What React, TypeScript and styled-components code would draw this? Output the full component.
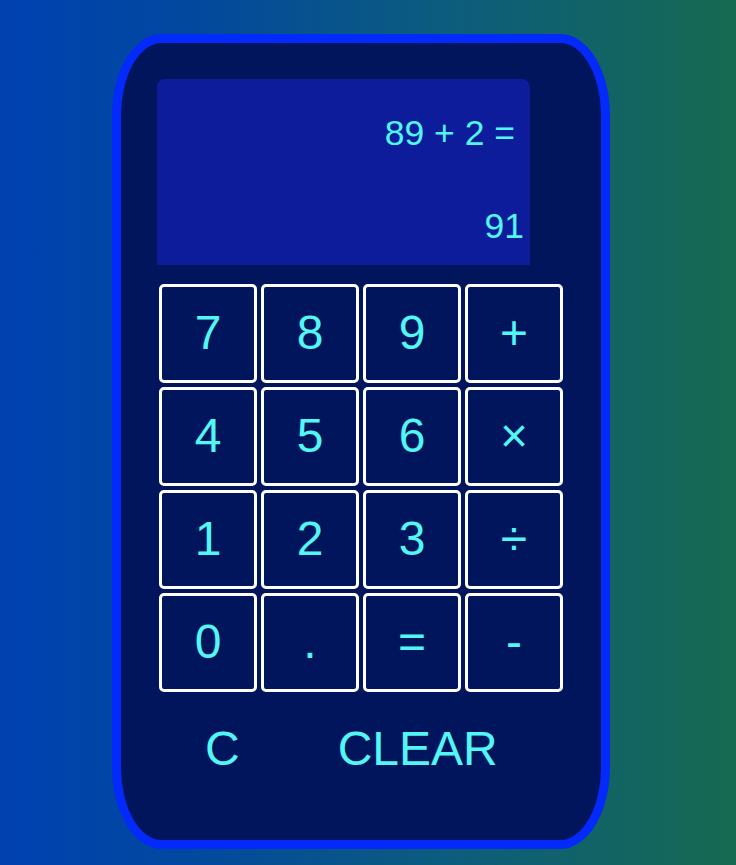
import React from "react";
import styled, { createGlobalStyle } from "styled-components";

const Global = createGlobalStyle`
  html, body { margin: 0; padding: 0; height: 100%; }
  body {
    background: linear-gradient(to right, #0041b1 0%, #02489f 25%, #0c5c7e 60%, #166a50 100%);
    font-family: "Liberation Sans", Arial, sans-serif;
  }
  #root { height: 100%; }
`;

const Page = styled.div`
  height: 865px;
  padding: 34px 0 0 112px;
  box-sizing: border-box;
`;

const Calculator = styled.div`
  width: 480px;
  height: 797px;
  border: 9px solid #0429fb;
  border-radius: 10%;
  background: #01155c;
  display: flex;
  flex-direction: column;
`;

const Display = styled.div`
  margin: 36px 0 0 36px;
  width: 373px;
  height: 186px;
  box-sizing: border-box;
  background: #0c1c9a;
  border-radius: 8px 8px 0 0;
  padding: 34px 6px 18px 0;
  display: flex;
  flex-direction: column;
  justify-content: space-between;
  align-items: flex-end;
  color: #52f6f4;
  font-size: 35.5px;
`;

const Line = styled.div<{ $shift?: number }>`
  margin-right: ${(p) => p.$shift ?? 0}px;
`;

const Keypad = styled.div`
  margin: 19px 0 0 38px;
  display: grid;
  grid-template-columns: repeat(4, 98px);
  grid-auto-rows: 99px;
  gap: 4px;
`;

const Key = styled.button`
  box-sizing: border-box;
  border: 3px solid #ffffff;
  border-radius: 5px;
  background: #01155c;
  color: #52f6f4;
  font-family: "Liberation Sans", Arial, sans-serif;
  font-size: 48px;
  padding: 0 0 3px;
  display: flex;
  align-items: center;
  justify-content: center;
`;

const Footer = styled.div`
  margin: 29px 0 0 84px;
  display: flex;
  gap: 98px;
`;

const TextButton = styled.button`
  border: none;
  background: transparent;
  padding: 0;
  color: #52f6f4;
  font-family: "Liberation Sans", Arial, sans-serif;
  font-size: 48px;
`;

const keys = ["7", "8", "9", "+", "4", "5", "6", "×", "1", "2", "3", "÷", "0", ".", "=", "-"];

export default function App() {
  return (
    <Page>
      <Global />
      <Calculator>
        <Display>
          <Line $shift={9}>89 + 2 =</Line>
          <Line>91</Line>
        </Display>
        <Keypad>
          {keys.map((k) => (
            <Key key={k}>{k}</Key>
          ))}
        </Keypad>
        <Footer>
          <TextButton>C</TextButton>
          <TextButton>CLEAR</TextButton>
        </Footer>
      </Calculator>
    </Page>
  );
}
